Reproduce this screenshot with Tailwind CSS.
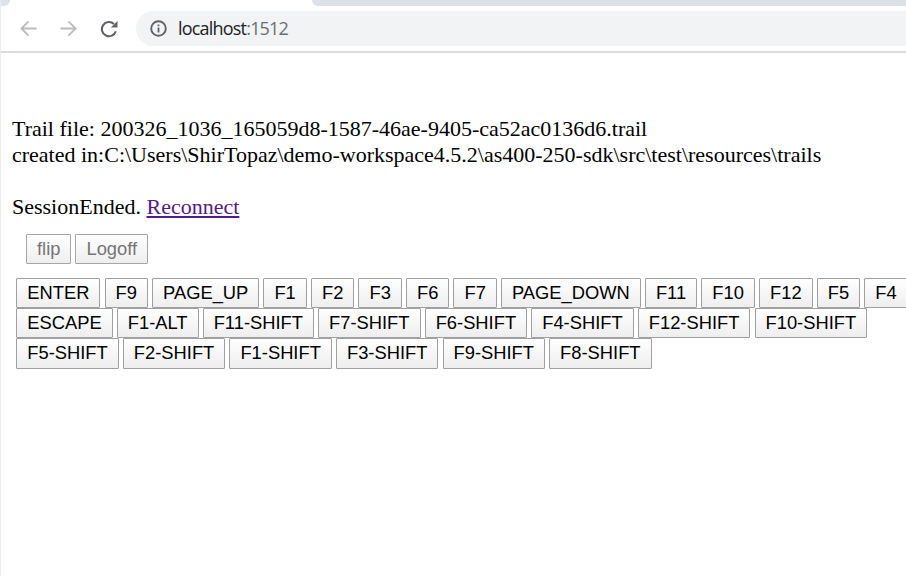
<!DOCTYPE html>
<html lang="en">
<head>
<meta charset="utf-8">
<title>localhost:1512</title>
<script src="https://cdn.jsdelivr.net/npm/@tailwindcss/browser@4"></script>
</head>
<body class="w-[906px] h-[576px] overflow-hidden bg-white border-l border-[#ececee] text-black">
<header class="h-[53px] border-b-2 border-[#dadce0] flex flex-col">
  <div class="h-[6px] shrink-0 flex justify-between">
    <div class="w-[9px] bg-[#dee1e6] rounded-br-[8px]"></div>
    <div class="w-[594px] bg-[#dee1e6] rounded-bl-[8px]"></div>
  </div>
  <div class="mt-[5px] flex items-center h-[35px]">
    <svg class="ml-[19px] w-[17px] h-4 shrink-0" viewBox="0 0 17 16" fill="none" stroke="#babcbe" stroke-width="1.8"><path d="M16.5 7.5H1.5M8.5 .4 1.4 7.5l7.1 7.1"/></svg>
    <svg class="ml-[23px] w-[17px] h-4 shrink-0" viewBox="0 0 17 16" fill="none" stroke="#babcbe" stroke-width="1.8"><path d="M.5 7.5h15M8.5 .4l7.1 7.1-7.1 7.1"/></svg>
    <svg class="ml-[23px] w-[18px] h-[18px] shrink-0" viewBox="0 0 18 18"><path d="M15.8 11.2A7.1 7.1 0 1 1 13.9 4" fill="none" stroke="#5f6368" stroke-width="2.1"/><path d="M17.5 1v6.6h-6.6z" fill="#5f6368"/></svg>
    <div class="ml-[18px] flex-1 h-[35px] rounded-l-full bg-[#f1f3f4] flex items-center">
      <svg class="ml-[14px] w-[17px] h-[17px] shrink-0" viewBox="0 0 17 17"><circle cx="8.5" cy="8.5" r="7.3" fill="none" stroke="#5f6368" stroke-width="1.9"/><path d="M7.6 7.6h1.8v5H7.6zM7.6 4.4h1.8v1.8H7.6z" fill="#5f6368"/></svg>
      <span class="ml-[11px] pb-px whitespace-nowrap font-['Open_Sans',sans-serif] text-[18px] leading-[34px] tracking-[-0.8px] text-[#202124]">localhost<span class="text-[#6b6f73]">:1512</span></span>
    </div>
  </div>
</header>
<main>
  <div class="pt-[63px] pl-[11px] font-['Liberation_Serif',serif] text-[22px] leading-[26px] whitespace-nowrap">
    <p>Trail file: 200326_1036_165059d8-1587-46ae-9405-ca52ac0136d6.trail</p>
    <p>created in:C:\Users\ShirTopaz\demo-workspace4.5.2\as400-250-sdk\src\test\resources\trails</p>
    <p class="mt-[26px]">SessionEnded. <a href="#" class="text-[#551a8b] underline">Reconnect</a></p>
  </div>
  <div class="mt-[14px] ml-[25px] flex gap-x-[4px] font-['Liberation_Sans',sans-serif] text-[18.33px] leading-[28px] text-[#757575] *:h-[30px] *:px-[10px] *:border *:border-[#a6a6a6] *:rounded-[1px] *:bg-linear-to-b *:from-white *:to-[#eeeeee]">
    <button disabled>flip</button><button disabled>Logoff</button>
  </div>
  <div class="mt-[14px] ml-[15.3px] w-max font-['Liberation_Sans',sans-serif] text-[18.33px] leading-[28px] whitespace-nowrap *:flex *:gap-x-[4.13px] **:[button]:h-[30px] **:[button]:shrink-0 **:[button]:px-[10px] **:[button]:border **:[button]:border-[#a0a0a0] **:[button]:rounded-[1px] **:[button]:bg-linear-to-b **:[button]:from-white **:[button]:to-[#eeeeee]">
    <div><button>ENTER</button><button>F9</button><button>PAGE_UP</button><button>F1</button><button>F2</button><button>F3</button><button>F6</button><button>F7</button><button>PAGE_DOWN</button><button>F11</button><button>F10</button><button>F12</button><button>F5</button><button>F4</button></div>
    <div><button>ESCAPE</button><button>F1-ALT</button><button>F11-SHIFT</button><button>F7-SHIFT</button><button>F6-SHIFT</button><button>F4-SHIFT</button><button>F12-SHIFT</button><button>F10-SHIFT</button></div>
    <div class="*:pb-px *:min-h-[31px]"><button>F5-SHIFT</button><button>F2-SHIFT</button><button>F1-SHIFT</button><button>F3-SHIFT</button><button>F9-SHIFT</button><button>F8-SHIFT</button></div>
  </div>
</main>
</body>
</html>
